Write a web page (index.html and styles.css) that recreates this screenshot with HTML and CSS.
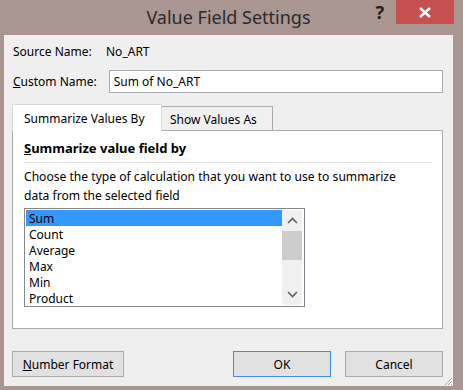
FILE: index.html
```html
<!DOCTYPE html>
<html lang="en">
<head>
    <meta charset="UTF-8">
    <title>Value Field Settings</title>
    <link rel="stylesheet" href="styles.css">
</head>
<body>
    <div class="window">
        <div class="titlebar">
            <div></div>
            <div class="title">Value Field Settings</div>
            <div class="controls">
                <span class="help">?</span>
                <span class="close">
                    <svg width="12" height="11" viewBox="0 0 12 11">
                        <path d="M1 1 L11 10 M11 1 L1 10" stroke="#fff" stroke-width="2.4" fill="none"/>
                    </svg>
                </span>
            </div>
        </div>
        <div class="client">
            <div class="row source">
                <span class="label">Source Name:</span>
                <span>No_ART</span>
            </div>
            <div class="row custom">
                <label class="label"><u>C</u>ustom Name:</label>
                <input class="text-input" type="text" value="Sum of No_ART">
            </div>
            <div class="tabs">
                <div class="tab active">Summarize Values By</div>
                <div class="tab">Show Values As</div>
            </div>
            <div class="panel">
                <div class="heading"><u>S</u>ummarize value field by</div>
                <div class="desc">Choose the type of calculation that you want to use to summarize<br>data from the selected field</div>
                <div class="listbox">
                    <ul class="items">
                        <li class="selected">Sum</li>
                        <li>Count</li>
                        <li>Average</li>
                        <li>Max</li>
                        <li>Min</li>
                        <li>Product</li>
                    </ul>
                    <div class="scrollbar">
                        <span class="arrow">
                            <svg width="11" height="7" viewBox="0 0 11 7">
                                <path d="M1 6 L5.5 1.5 L10 6" stroke="#606060" stroke-width="1.6" fill="none"/>
                            </svg>
                        </span>
                        <span class="thumb"></span>
                        <span class="track"></span>
                        <span class="arrow">
                            <svg width="11" height="7" viewBox="0 0 11 7">
                                <path d="M1 1 L5.5 5.5 L10 1" stroke="#606060" stroke-width="1.6" fill="none"/>
                            </svg>
                        </span>
                    </div>
                </div>
            </div>
            <div class="buttons">
                <button class="btn format"><u>N</u>umber Format</button>
                <button class="btn ok">OK</button>
                <button class="btn cancel">Cancel</button>
            </div>
            <svg class="grip" width="10" height="10" viewBox="0 0 10 10">
                <path d="M9 2 L2 9 M9 5 L5 9 M9 8 L8 9" stroke="#b0b0b0" stroke-width="1" fill="none"/>
            </svg>
        </div>
    </div>
</body>
</html>
```

FILE: styles.css
```css
body {
    margin: 0;
    background-color: #a99690;
    font-family: "Noto Sans", "Open Sans", sans-serif;
    font-size: 12px;
    color: #000;
}

.window {
    width: 463px;
    height: 390px;
    display: flex;
    flex-direction: column;
    background-color: #a99690;
}

.titlebar {
    height: 35px;
    display: grid;
    grid-template-columns: 1fr auto 1fr;
}

.title {
    font-size: 18px;
    line-height: 24px;
    padding-top: 5px;
    padding-right: 6px;
    color: #2b2b2b;
}

.controls {
    justify-self: end;
    display: flex;
    align-items: flex-start;
}

.help {
    font-size: 18px;
    font-weight: bold;
    line-height: 20px;
    margin-top: 2px;
    color: #222;
    margin-right: 12px;
}

.close {
    width: 58px;
    height: 24px;
    margin-right: 9px;
    background-color: #c75050;
    display: flex;
    justify-content: center;
    align-items: center;
}

.client {
    position: relative;
    flex: 1;
    margin: 0 10px 4px 4px;
    padding: 8px 10px 9px 8px;
    background-color: #efefef;
    display: flex;
    flex-direction: column;
}

.row {
    display: flex;
    align-items: center;
    padding-left: 1px;
}

.source {
    height: 16px;
    line-height: 16px;
    padding-top: 1px;
}

.source .label {
    width: 93px;
}

.custom {
    margin-top: 10px;
    height: 23px;
}

.custom .label {
    width: 96px;
}

.text-input {
    box-sizing: border-box;
    width: 335px;
    height: 23px;
    margin: 0;
    padding: 0 4px;
    border: 1px solid #abadb3;
    font-family: inherit;
    font-size: 12px;
    color: #000;
    outline: none;
}

.tabs {
    display: flex;
    align-items: flex-start;
    margin-top: 11px;
    height: 27px;
    margin-bottom: -1px;
    position: relative;
    z-index: 1;
}

.tab {
    box-sizing: border-box;
    line-height: 16px;
}

.tab.active {
    width: 150px;
    height: 27px;
    padding: 6px 0 0 11px;
    background-color: #fff;
    border: 1px solid #d9d9d9;
    border-bottom: none;
}

.tab:not(.active) {
    width: 111px;
    height: 24px;
    margin-top: 2px;
    padding: 5px 0 0 8px;
    background-color: #f0f0f0;
    border: 1px solid #acacac;
    border-left: none;
    border-bottom: none;
}

.panel {
    box-sizing: border-box;
    height: 199px;
    padding: 8px 10px 0 11px;
    background-color: #fff;
    border: 1px solid #acacac;
}

.heading {
    font-weight: bold;
    font-size: 13px;
    line-height: 18px;
    padding-bottom: 5px;
    border-bottom: 1px solid #e3e3e3;
}

.desc {
    margin-top: 4px;
    line-height: 19px;
    font-size: 12.1px;
}

.listbox {
    box-sizing: border-box;
    width: 281px;
    height: 99px;
    margin-top: 3px;
    padding: 1px 2px 1px 1px;
    border: 1px solid #828790;
    display: flex;
}

.items {
    flex: 1;
    list-style: none;
    margin: 0;
    padding: 0;
}

.items li {
    height: 16px;
    line-height: 17px;
    padding-left: 3px;
}

.items li.selected {
    background-color: #3399ff;
    outline: 1px dotted #b8782e;
    outline-offset: -1px;
}

.scrollbar {
    width: 20px;
    background-color: #f0f0f0;
    display: flex;
    flex-direction: column;
}

.arrow {
    height: 21px;
    display: flex;
    justify-content: center;
    align-items: center;
}

.thumb {
    height: 29px;
    background-color: #cdcdcd;
}

.track {
    flex: 1;
}

.buttons {
    display: flex;
    margin-top: 22px;
    height: 26px;
}

.btn {
    box-sizing: border-box;
    height: 26px;
    margin: 0;
    padding: 0;
    background-color: #e1e1e1;
    border: 1px solid #adadad;
    font-family: inherit;
    font-size: 12px;
    color: #000;
}

.format {
    width: 112px;
}

.ok {
    width: 98px;
    margin-left: auto;
    border-color: #3c8fe0;
}

.cancel {
    width: 98px;
    margin-left: 14px;
}

.grip {
    position: absolute;
    right: 0;
    bottom: 0;
}
```
